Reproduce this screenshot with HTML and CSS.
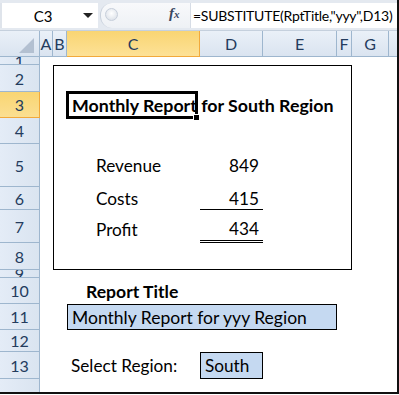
FILE: index.html
```html
<!DOCTYPE html>
<html lang="en">
  <head>
    <meta charset="utf-8">
    <title>Monthly Report</title>
    <link rel="stylesheet" href="styles.css">
  </head>
  <body>
    <div class="window">

      <!-- formula bar -->
      <div class="fbar">
        <div class="namebox">
          <span class="ref">C3</span>
          <span class="drop"></span>
        </div>
        <div class="fxarea">
          <span class="grip"></span>
          <span class="fx"><i>f</i><i class="x">x</i></span>
        </div>
        <div class="formula">=SUBSTITUTE(RptTitle,"yyy",D13)</div>
      </div>

      <!-- column headers -->
      <div class="colheads">
        <div class="corner"><span class="tri"></span></div>
        <div class="ch">A</div>
        <div class="ch">B</div>
        <div class="ch sel">C</div>
        <div class="ch">D</div>
        <div class="ch">E</div>
        <div class="ch">F</div>
        <div class="ch">G</div>
        <div class="ch last"></div>
      </div>

      <!-- sheet -->
      <div class="sheet">
        <div class="rh">1</div>
        <div class="rh">2</div>
        <div class="rh sel">3</div>
        <div class="rh">4</div>
        <div class="rh">5</div>
        <div class="rh">6</div>
        <div class="rh">7</div>
        <div class="rh">8</div>
        <div class="rh">9</div>
        <div class="rh">10</div>
        <div class="rh">11</div>
        <div class="rh">12</div>
        <div class="rh">13</div>
        <div class="rh end"></div>

        <div class="report"></div>

        <div class="cell title">
          Monthly Report for South Region
          <span class="active"><span class="handle"></span></span>
        </div>

        <div class="cell lbl r5">Revenue</div>
        <div class="cell num r5">849</div>
        <div class="cell lbl r6">Costs</div>
        <div class="cell num r6 under">415</div>
        <div class="cell lbl r7">Profit</div>
        <div class="cell num r7 dbl">434</div>

        <div class="cell rtitle">Report Title</div>
        <div class="cell input wide">Monthly Report for yyy Region</div>
        <div class="cell region">Select Region:</div>
        <div class="cell input south">South</div>
      </div>

    </div>
  </body>
</html>
```

FILE: styles.css
```css
* {
  box-sizing: border-box;
}

body {
  margin: 0;
  background: #fff;
  font-family: Lato, "Open Sans", sans-serif;
}

.window {
  width: 399px;
  height: 394px;
  border-right: 2px solid #111;
  border-bottom: 2px solid #111;
  overflow: hidden;
  position: relative;
}

/* formula bar */
.fbar {
  height: 31px;
  display: flex;
  padding-top: 3px;
  background: #e4e9f0;
  border-bottom: 1px solid #c5d0dd;
}

.namebox {
  width: 98px;
  height: 25px;
  background: #fff;
  display: flex;
  align-items: center;
  position: relative;
  border-left: 2px solid #dfe4eb;
}

.namebox .ref {
  flex: 1;
  text-align: center;
  font-size: 15px;
  padding-right: 14px;
  color: #000;
}

.namebox .drop {
  position: absolute;
  right: 5px;
  top: 10px;
  border-left: 5px solid transparent;
  border-right: 5px solid transparent;
  border-top: 5px solid #222;
}

.fxarea {
  width: 90px;
  height: 25px;
  margin-left: 2px;
  background: linear-gradient(#f8f9fb, #eef1f5);
  border-radius: 12px 0 0 12px;
  border-left: 1px solid #c9d1dc;
  position: relative;
}

.grip {
  position: absolute;
  left: 4px;
  top: 5px;
  width: 13px;
  height: 13px;
  border-radius: 50%;
  background: radial-gradient(circle at 50% 40%, #ffffff, #d5dbe4);
  border: 1px solid #c6ceda;
}

.fx {
  position: absolute;
  left: 68px;
  top: 2px;
  font-family: "Liberation Serif", serif;
  font-weight: bold;
  font-style: italic;
  font-size: 15px;
  color: #39485f;
}

.fx .x {
  font-size: 11px;
}

.formula {
  flex: 1;
  height: 25px;
  background: #fff;
  border-left: 1px solid #d7dde6;
  padding-left: 2px;
  font-size: 14px;
  letter-spacing: -0.25px;
  line-height: 25px;
  white-space: nowrap;
  overflow: hidden;
  color: #000;
}

/* shared column sizes */
.colheads,
.sheet {
  display: grid;
  grid-template-columns: 40px 13px 14px 133px 63px 74px 15px 37px 1fr;
}

.colheads {
  height: 26px;
  background: linear-gradient(#eaf0f8, #dae4f0);
  border-bottom: 1px solid #9eb6ce;
}

.corner {
  position: relative;
  border-right: 1px solid #9eb6ce;
}

.corner .tri {
  position: absolute;
  right: 5px;
  bottom: 4px;
  border-left: 15px solid transparent;
  border-bottom: 15px solid #b3c0d1;
}

.ch {
  border-right: 1px solid #9eb6ce;
  text-align: center;
  font-size: 16px;
  line-height: 25px;
  color: #243c5e;
}

.ch.sel {
  background: linear-gradient(#f9d572, #fde197);
  border-right-color: #f2a93b;
  border-bottom: 1px solid #f2a93b;
}

.ch.last {
  border-right: none;
}

.sheet {
  grid-template-rows: 8px 27px 26px 26px 43px 23px 33px 27px 8px 26px 26px 22px 27px 1fr;
  height: 336px;
}

.rh {
  grid-column: 1;
  background: linear-gradient(90deg, #e4ecf7, #dae4f0);
  border-right: 1px solid #9eb6ce;
  border-bottom: 1px solid #9eb6ce;
  display: flex;
  align-items: center;
  justify-content: center;
  overflow: hidden;
  font-size: 16px;
  color: #243c5e;
}

.rh.sel {
  background: linear-gradient(#f9d572, #fbdf92);
  border-bottom-color: #f2a93b;
  border-right-color: #f2a93b;
}

.rh.end {
  border-bottom: none;
}

/* the framed report area B2:F8 */
.report {
  grid-column: 3 / 8;
  grid-row: 2 / 9;
  border: 1px solid #000;
}

.cell {
  display: flex;
  align-items: center;
  white-space: nowrap;
  font-size: 17.2px;
  color: #000;
}

.title {
  grid-column: 4;
  grid-row: 3;
  position: relative;
  padding-left: 5px;
  font-weight: bold;
  font-size: 17.8px;
}

.active {
  position: absolute;
  left: -1px;
  top: -1px;
  width: 132px;
  height: 28px;
  border: 3px solid #000;
}

.handle {
  position: absolute;
  right: -4px;
  bottom: -4px;
  width: 5px;
  height: 5px;
  background: #000;
  outline: 1px solid #fff;
}

.lbl {
  grid-column: 4;
  padding-left: 29px;
}

.num {
  grid-column: 5;
  justify-content: flex-end;
  padding-right: 4px;
}

.r5 { grid-row: 5; }
.r6 { grid-row: 6; }
.r7 { grid-row: 7; padding-top: 6px; }

.under {
  border-bottom: 1px solid #000;
}

.dbl {
  border-bottom: 3px double #000;
}

.rtitle {
  grid-column: 4;
  grid-row: 10;
  padding-left: 19px;
  font-weight: bold;
  font-size: 17.6px;
}

.input {
  background: #c5d9f1;
  border: 1px solid #000;
  padding-left: 4px;
}

.wide {
  grid-column: 4 / 7;
  grid-row: 11;
  font-size: 17.5px;
}

.region {
  grid-column: 4;
  grid-row: 13;
  padding-left: 4px;
}

.south {
  grid-column: 5;
  grid-row: 13;
}
```
